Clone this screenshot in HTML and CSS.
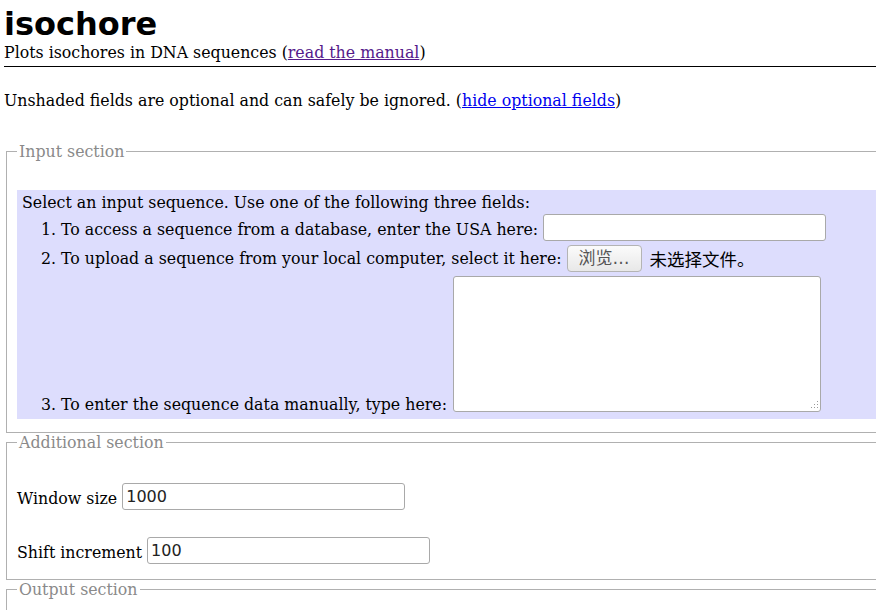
FILE: index.html
```html
<!DOCTYPE html>
<html lang="en">
<head>
<meta charset="utf-8">
<title>isochore</title>
<link rel="stylesheet" href="styles.css">
</head>
<body>
<div class="page">
  <h1 class="title">isochore</h1>
  <div class="subtitle">Plots isochores in DNA sequences (<a class="visited" href="#">read the manual</a>)</div>
  <hr class="rule">
  <p class="note">Unshaded fields are optional and can safely be ignored. (<a class="link" href="#">hide optional fields</a>)</p>

  <fieldset class="section section-input">
    <legend class="legend">Input section</legend>
    <div class="shaded">
      <div class="intro">Select an input sequence. Use one of the following three fields:</div>
      <ol class="choices">
        <li>To access a sequence from a database, enter the USA here: <input class="field" type="text"></li>
        <li>To upload a sequence from your local computer, select it here: <span class="file"><span class="file-btn">浏览…</span><span class="file-status">未选择文件。</span></span></li>
        <li><span class="bottom-row"><span>To enter the sequence data manually, type here:</span><span class="area-wrap"><textarea class="area"></textarea><svg class="grip" width="10" height="10" viewBox="0 0 10 10" aria-hidden="true"><g fill="#9a9a9a"><rect x="8" y="1" width="1" height="1"/><rect x="5" y="4" width="1" height="1"/><rect x="8" y="4" width="1" height="1"/><rect x="2" y="7" width="1" height="1"/><rect x="5" y="7" width="1" height="1"/><rect x="8" y="7" width="1" height="1"/></g></svg></span></span></li>
      </ol>
    </div>
  </fieldset>

  <fieldset class="section section-additional">
    <legend class="legend">Additional section</legend>
    <p class="row">Window size <input class="field" type="text" value="1000"></p>
    <p class="row row-second">Shift increment <input class="field" type="text" value="100"></p>
  </fieldset>

  <fieldset class="section section-output">
    <legend class="legend">Output section</legend>
    <p class="row">&nbsp;</p>
  </fieldset>
</div>
</body>
</html>
```

FILE: styles.css
```css
html {
  overflow: hidden;
  background: #fff;
}

body {
  margin: 5px 0 0 4px;
  width: 1000px;
  font-family: "DejaVu Serif", serif;
  font-size: 15.8px;
  color: #000;
}

.title {
  margin: 0;
  font-family: "DejaVu Sans", sans-serif;
  font-weight: bold;
  font-size: 32px;
  line-height: normal;
}

.subtitle {
  margin: 0;
  line-height: 19px;
}

a.visited {
  color: #551a8b;
}

a.link {
  color: #0000ee;
}

.rule {
  margin: 4px 0 0 0;
  border: 0;
  border-top: 1.5px solid #000;
  height: 0;
}

.note {
  margin: 24px 0 32px 0;
  line-height: 19px;
}

.section {
  margin: 0 0 0 2px;
  border: 1px solid #b0b0b0;
  padding: 29px 0 13px 10px;
  min-width: 0;
  line-height: 19px;
}

.section-output {
  padding-bottom: 40px;
}

.legend {
  padding: 0 2px;
  color: #8a8a8a;
}

.shaded {
  background: #ddddfd;
  padding: 3px 5px 5px 5px;
}

.intro {
  margin: 0;
}

.choices {
  margin: 0;
  padding-left: 39px;
}

.field {
  box-sizing: border-box;
  width: 283px;
  height: 27px;
  margin: 2px 0;
  padding: 0 3px;
  border: 1px solid #a9a9a9;
  border-radius: 3px;
  background: #fff;
  font-family: "DejaVu Sans", sans-serif;
  font-size: 16px;
  color: #222;
  vertical-align: 2px;
}

.file {
  display: inline-flex;
  align-items: center;
  gap: 8px;
  vertical-align: baseline;
}

.file-btn {
  box-sizing: border-box;
  display: inline-flex;
  align-items: center;
  justify-content: center;
  width: 75px;
  height: 27px;
  margin: 2px 0;
  border: 1px solid #b4b4b4;
  border-radius: 4px;
  background: linear-gradient(#fbfbfb, #e8e8e8);
  color: #555;
  font-family: "DejaVu Sans", "Noto Sans CJK SC", sans-serif;
  font-size: 17px;
}

.file-status {
  font-family: "Noto Sans CJK SC", sans-serif;
  font-size: 17.5px;
}

.bottom-row {
  display: inline-flex;
  align-items: flex-end;
  gap: 6px;
  vertical-align: baseline;
}

.area-wrap {
  position: relative;
  display: block;
  margin: 2px 0;
  height: 136px;
}

.area {
  box-sizing: border-box;
  display: block;
  width: 368px;
  height: 136px;
  margin: 0;
  border: 1px solid #a9a9a9;
  border-radius: 3px;
  background: #fff;
  resize: none;
}

.grip {
  position: absolute;
  right: 2px;
  bottom: 2px;
}

.row {
  margin: 0;
}

.row-second {
  margin-top: 23px;
}
```
